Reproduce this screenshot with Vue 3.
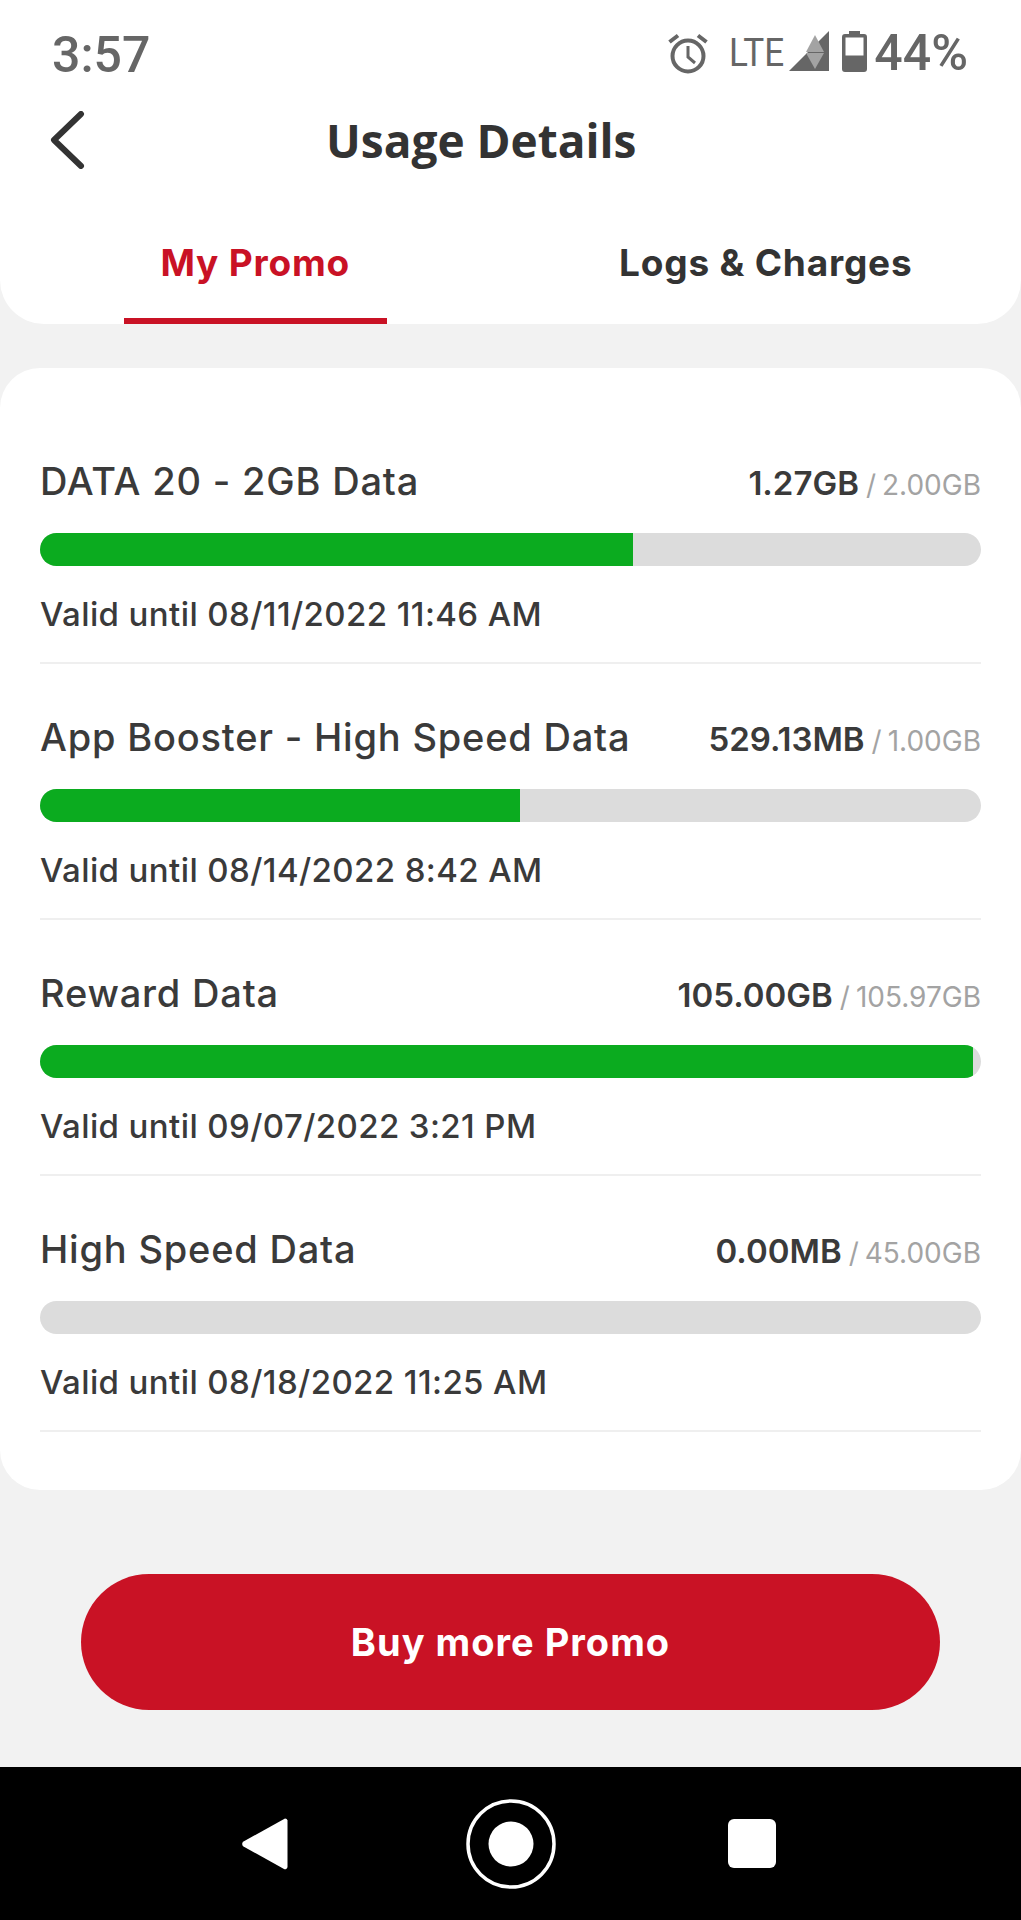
<script setup>
const rows = [
  { name: 'DATA 20 - 2GB Data', used: '1.27GB', total: '2.00GB', pct: 63, valid: '08/11/2022 11:46 AM' },
  { name: 'App Booster - High Speed Data', used: '529.13MB', total: '1.00GB', pct: 51, valid: '08/14/2022 8:42 AM' },
  { name: 'Reward Data', used: '105.00GB', total: '105.97GB', pct: 99.1, valid: '09/07/2022 3:21 PM' },
  { name: 'High Speed Data', used: '0.00MB', total: '45.00GB', pct: 0, valid: '08/18/2022 11:25 AM' },
]
</script>

<template>
  <div class="screen">
    <header class="head">
      <div class="status">
        <span class="time">3:57</span>
        <div class="status-right">
          <svg class="alarm" width="40" height="41" viewBox="0 0 40 41" fill="none" stroke="#666" stroke-width="4">
            <circle cx="20" cy="23" r="15.500" />
            <path d="M20 13v11l7 6" stroke-width="3" />
            <path d="M1.500 9 10 2.500M38.500 9 30 2.500" />
          </svg>
          <span class="lte">LTE</span>
          <svg class="signal" width="40" height="40" viewBox="0 0 40 40">
            <path d="M0 40 40 0v40z" fill="#666" />
            <path d="M26 4l9 17H17z" fill="#a3a3a3" />
            <path d="M26 38l-9-16h18z" fill="#a3a3a3" />
          </svg>
          <svg class="battery" width="25" height="41" viewBox="0 0 25 41">
            <path d="M7 0h11v3h4a3 3 0 0 1 3 3v32a3 3 0 0 1-3 3H3a3 3 0 0 1-3-3V6a3 3 0 0 1 3-3h4z" fill="#666" />
            <rect x="3.500" y="6.500" width="18" height="18" fill="#fff" />
          </svg>
          <span class="pct">44%</span>
        </div>
      </div>
      <div class="title-row">
        <svg class="chev" width="36" height="58" viewBox="0 0 36 58" fill="none" stroke="#333" stroke-width="6" stroke-linecap="round" stroke-linejoin="round">
          <path d="M31 3 4 29l27 26" />
        </svg>
        <h1 class="title">Usage Details</h1>
      </div>
      <nav class="tabs">
        <div class="tab active"><span>My Promo</span></div>
        <div class="tab"><span>Logs &amp; Charges</span></div>
      </nav>
    </header>

    <section class="card">
      <div v-for="r in rows" :key="r.name" class="row">
        <div class="row-top">
          <span class="name">{{ r.name }}</span>
          <span class="amount"><b>{{ r.used }}</b><i class="slash">/</i><i>{{ r.total }}</i></span>
        </div>
        <div class="track"><div class="fill" :style="{ width: r.pct + '%' }"></div></div>
        <div class="valid">Valid until {{ r.valid }}</div>
      </div>
    </section>

    <div class="cta-wrap">
      <button class="cta">Buy more Promo</button>
    </div>

    <footer class="nav">
      <svg width="46" height="54" viewBox="0 0 46 54" fill="#fff"><path d="M43 1.500a2.500 2.500 0 0 1 2.500 2V50a2.500 2.500 0 0 1-3.500 2L1.500 29.500a3 3 0 0 1 0-5z" /></svg>
      <svg class="home" width="90" height="90" viewBox="0 0 90 90"><circle cx="45" cy="45" r="43" fill="none" stroke="#fff" stroke-width="3.500" /><circle cx="45" cy="45" r="22.500" fill="#fff" /></svg>
      <div class="sq"></div>
    </footer>
  </div>
</template>

<style>
body { margin: 0; background: #f2f2f2; }
</style>

<style scoped>
.screen {
  width: 1021px;
  height: 1920px;
  display: flex;
  flex-direction: column;
  background: #f2f2f2;
  font-family: Inter, "Open Sans", sans-serif;
  color: #3a3a3a;
  overflow: hidden;
}
.head {
  height: 324px;
  box-sizing: border-box;
  background: #fff;
  border-radius: 0 0 44px 44px;
  display: flex;
  flex-direction: column;
}
.status {
  height: 106px;
  box-sizing: border-box;
  padding: 26px 53px 0 52px;
  display: flex;
  justify-content: space-between;
  align-items: flex-start;
  color: #666;
  font-family: Roboto, sans-serif;
}
.time { font-size: 50px; line-height: 58px; font-weight: 500; }
.status-right { display: flex; align-items: flex-start; padding-top: 6px; }
.alarm { margin-top: 1px; }
.lte { font-size: 39px; line-height: 42px; margin: 0 8px 0 21px; transform: scaleX(.9); transform-origin: left; width: 52px; }
.signal { margin-top: -1px; }
.battery { margin-left: 13px; margin-top: -1px; }
.pct { font-size: 50px; line-height: 42px; margin-left: 7px; font-weight: 500; }
.title-row {
  height: 68px;
  display: flex;
  align-items: center;
  padding-left: 50px;
}
.title {
  margin: 0 0 0 240px;
  font-family: "Open Sans", sans-serif;
  font-size: 46px;
  font-weight: 700;
  color: #333;
}
.tabs {
  flex: 1;
  display: flex;
}
.tab {
  flex: 1;
  display: flex;
  justify-content: center;
  padding-top: 68px;
  font-size: 37px;
  font-weight: 700;
  color: #333;
  line-height: 42px;
  position: relative;
  letter-spacing: .8px;
}
.tab.active { color: #c91225; }
.tab.active::after {
  content: "";
  position: absolute;
  left: 124px;
  bottom: 0;
  width: 263px;
  height: 6px;
  background: #c91225;
}
.card {
  margin-top: 44px;
  background: #fff;
  border-radius: 40px;
  padding: 39px 40px 58px 40px;
  height: 1122px;
  box-sizing: border-box;
  display: flex;
  flex-direction: column;
}
.row {
  height: 257px;
  box-sizing: border-box;
  border-bottom: 2px solid #efefef;
  padding-top: 53px;
  margin-bottom: -1px;
}
.row-top {
  display: flex;
  justify-content: space-between;
  align-items: baseline;
  height: 42px;
  line-height: 42px;
}
.name { font-size: 38px; font-weight: 500; letter-spacing: .8px; }
.amount { font-size: 33px; }
.amount b { font-weight: 600; }
.amount i { font-style: normal; font-size: 28px; color: #a3a3a3; }
.amount .slash { margin: 0 6px 0 7px; }
.track {
  margin-top: 31px;
  height: 33px;
  background: #dcdcdc;
  border-radius: 17px;
  overflow: hidden;
}
.fill { height: 100%; background: #0bab1f; }
.valid { margin-top: 28px; font-size: 33px; font-weight: 500; line-height: 40px; letter-spacing: .4px; }
.cta-wrap { padding: 84px 81px 0; }
.cta {
  display: block;
  width: 100%;
  height: 136px;
  border: 0;
  border-radius: 68px;
  background: #c91225;
  color: #fff;
  font-family: inherit;
  font-size: 38px;
  font-weight: 700;
  letter-spacing: 1px;
}
.nav {
  margin-top: auto;
  height: 153px;
  background: #000;
  box-sizing: border-box;
  padding: 0 245px 0 242px;
  display: flex;
  align-items: center;
  justify-content: space-between;
}
.home { margin-left: 6px; }
.sq { width: 48px; height: 49px; border-radius: 6px; background: #fff; }
</style>
